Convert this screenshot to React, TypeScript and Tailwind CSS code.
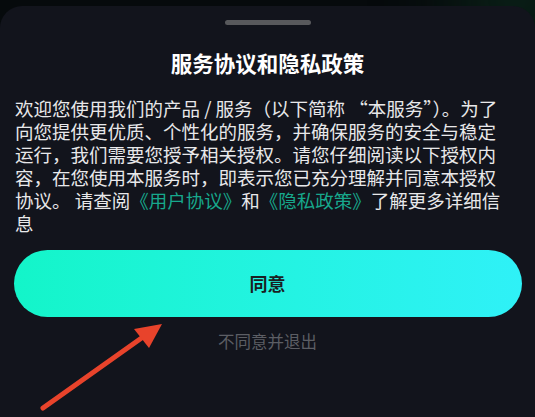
import React from "react";

export default function App() {
  const lines = [
    "欢迎您使用我们的产品 / 服务（以下简称 “本服务”）。为了",
    "向您提供更优质、个性化的服务，并确保服务的安全与稳定",
    "运行，我们需要您授予相关授权。请您仔细阅读以下授权内",
    "容，在您使用本服务时，即表示您已充分理解并同意本授权",
  ];
  return (
    <div
      className="relative w-[535px] h-[417px] overflow-hidden bg-[#060a0c]"
      style={{ fontFamily: '"Noto Sans CJK SC", "Noto Sans", sans-serif' }}
    >
      <div className="absolute right-[-40px] top-[-40px] w-[120px] h-[80px] rounded-full bg-[#0c2a1c] blur-2xl" />
      <div className="relative mt-[6px] h-[411px] rounded-t-[22px] bg-[#12141c] flex flex-col items-center">
        <div className="mt-[14px] w-[86px] h-[5px] rounded-full bg-[#58595c]" />
        <div className="mt-[24px] text-[21.5px] leading-[28px] font-bold text-white">服务协议和隐私政策</div>
        <div className="mt-[20px] w-full px-[15px] text-[18.5px] leading-[23px] text-[#e8e8ea] whitespace-nowrap">
          {lines.map((l, i) => (
            <div key={i} className="h-[23px]">{l}</div>
          ))}
          <div className="h-[23px]">
            协议。 请查阅<span className="inline-block text-[#17a88c]">《用户协议》</span>和<span className="inline-block text-[#17a88c]">《隐私政策》</span>了解更多详细信
          </div>
          <div className="h-[23px]">息</div>
        </div>
        <button className="mt-[15px] w-[508px] h-[67px] rounded-full bg-gradient-to-r from-[#13f5c9] to-[#2ff1f7] text-[18px] font-bold text-[#1a1f22]">
          同意
        </button>
        <div className="mt-[13px] text-[16.5px] leading-[22px] text-[#5c5e64]">不同意并退出</div>
      </div>
      <svg className="absolute left-0 top-0" width="535" height="417" viewBox="0 0 535 417">
        <line x1="43" y1="408" x2="150" y2="332" stroke="#e8432b" strokeWidth="5" strokeLinecap="round" />
        <polygon points="162,324 134,329 149,348" fill="#e8432b" />
      </svg>
    </div>
  );
}
